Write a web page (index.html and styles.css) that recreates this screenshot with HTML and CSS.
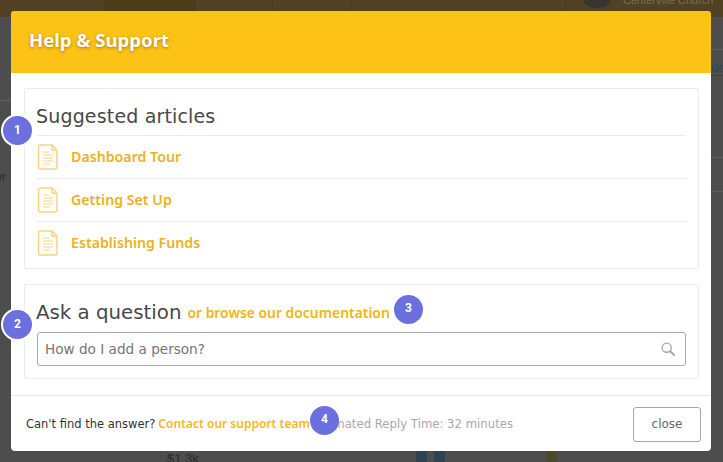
FILE: index.html
```html
<!DOCTYPE html>
<html lang="en">
<head>
<meta charset="utf-8">
<title>Help &amp; Support</title>
<link rel="stylesheet" href="styles.css">
</head>
<body>
<div class="backdrop">
  <div class="bd-top">
    <span class="bd-cell bd-c1"></span><span class="bd-cell bd-c2"></span><span class="bd-cell bd-c3"></span><span class="bd-cell bd-c4"></span><span class="bd-cell bd-c5"></span>
    <span class="bd-avatar"></span><span class="bd-church">Centerville Church</span>
  </div>
  <div class="bd-line bd-line0"></div>
  <div class="bd-line bd-line1"></div>
  <div class="bd-line bd-line2"></div>
  <div class="bd-line bd-line3"></div>
  <span class="bd-link">oo</span>
  <span class="bd-or">or</span>
  <span class="bd-amount">$1.3k</span>
  <span class="bd-bar bd-b1"></span><span class="bd-bar bd-b2"></span><span class="bd-bar bd-b3"></span>
</div>

<div class="modal">
  <header class="modal-head"><h1 class="modal-title">Help &amp; Support</h1></header>
  <div class="modal-body">
    <section class="panel panel-articles">
      <h2 class="panel-title">Suggested articles</h2>
      <ul class="articles">
        <li class="article">
          <svg class="doc" viewBox="0 0 21 26" width="21" height="26"><path d="M1.5 3a2 2 0 0 1 2-2H15l5 5v17a2 2 0 0 1-2 2H3.500a2 2 0 0 1-2-2zM15 1v5h5" fill="none" stroke="#fad47f" stroke-width="1.500"/><path d="M6 8H12M6 11H16M6 14H16M6 17H16M6 20H13" fill="none" stroke="#fad47f" stroke-width="1.200"/></svg>
          <a class="article-link">Dashboard Tour</a>
        </li>
        <li class="article">
          <svg class="doc" viewBox="0 0 21 26" width="21" height="26"><path d="M1.5 3a2 2 0 0 1 2-2H15l5 5v17a2 2 0 0 1-2 2H3.500a2 2 0 0 1-2-2zM15 1v5h5" fill="none" stroke="#fad47f" stroke-width="1.500"/><path d="M6 8H12M6 11H16M6 14H16M6 17H16M6 20H13" fill="none" stroke="#fad47f" stroke-width="1.200"/></svg>
          <a class="article-link">Getting Set Up</a>
        </li>
        <li class="article">
          <svg class="doc" viewBox="0 0 21 26" width="21" height="26"><path d="M1.5 3a2 2 0 0 1 2-2H15l5 5v17a2 2 0 0 1-2 2H3.500a2 2 0 0 1-2-2zM15 1v5h5" fill="none" stroke="#fad47f" stroke-width="1.500"/><path d="M6 8H12M6 11H16M6 14H16M6 17H16M6 20H13" fill="none" stroke="#fad47f" stroke-width="1.200"/></svg>
          <a class="article-link">Establishing Funds</a>
        </li>
      </ul>
    </section>
    <section class="panel panel-ask">
      <div class="ask-head">
        <h2 class="panel-title panel-title-ask">Ask a question</h2>
        <a class="browse">or browse our documentation</a>
      </div>
      <div class="search">
        <span class="search-text">How do I add a person?</span>
        <svg class="search-icon" viewBox="0 0 16 16" width="14" height="14"><circle cx="6.500" cy="6.500" r="5.200" fill="none" stroke="#a9a9a9" stroke-width="1.600"/><path d="M10.500 10.500L15 15" stroke="#a9a9a9" stroke-width="2.400" stroke-linecap="round"/></svg>
      </div>
    </section>
  </div>
  <footer class="modal-foot">
    <span class="foot-q">Can't find the answer?</span>
    <a class="foot-link">Contact our support team</a>
    <span class="foot-time">Estimated Reply Time: 32 minutes</span>
    <button class="close-btn" type="button">close</button>
  </footer>
</div>

<span class="badge badge-ring badge-1">1</span>
<span class="badge badge-ring badge-2">2</span>
<span class="badge badge-3">3</span>
<span class="badge badge-4">4</span>
</body>
</html>
```

FILE: styles.css
```css
* { box-sizing: border-box; }
html, body { margin: 0; padding: 0; }
body {
  width: 723px;
  height: 462px;
  overflow: hidden;
  position: relative;
  background: #4d4d4d;
  font-family: "DejaVu Sans", sans-serif;
}
.backdrop { position: absolute; inset: 0; overflow: hidden; }
.bd-top { position: absolute; left: 0; top: 0; width: 723px; height: 17px; background: #524223; overflow: hidden; }
.bd-cell { position: absolute; top: 0; height: 17px; border-right: 1px solid #483a1e; }
.bd-c1 { left: 0; width: 105px; }
.bd-c2 { left: 105px; width: 91px; background: #4c3c18; }
.bd-c3 { left: 196px; width: 77px; }
.bd-c4 { left: 273px; width: 78px; }
.bd-c5 { left: 351px; width: 215px; }
.bd-avatar { position: absolute; left: 584px; top: -6px; width: 26px; height: 14px; border-radius: 50%; background: #37342f; }
.bd-church { position: absolute; left: 623px; top: -6px; font: 11px "Liberation Sans", sans-serif; color: #756d55; white-space: nowrap; }
.bd-line { position: absolute; height: 1px; background: #5c5c5c; }
.bd-line0 { left: 711px; top: 49px; width: 12px; }
.bd-line1 { left: 0; top: 100px; width: 11px; background: #636363; }
.bd-line2 { left: 711px; top: 157px; width: 12px; }
.bd-line3 { left: 711px; top: 191px; width: 12px; }
.bd-link { position: absolute; left: 711px; top: 61px; width: 12px; overflow: hidden; font: 13px/14px "Liberation Sans", sans-serif; color: #1f4a6b; border-bottom: 1px solid #1f4a6b; }
.bd-or { position: absolute; left: -5px; top: 170px; font: 12px "Liberation Sans", sans-serif; color: #2e2e2e; }
.bd-amount { position: absolute; left: 167px; top: 451px; font: 13px "Liberation Sans", sans-serif; color: #2b2b2b; }
.bd-bar { position: absolute; top: 451px; width: 11px; height: 11px; }
.bd-b1 { left: 416px; background: #2f4453; }
.bd-b2 { left: 434px; background: #2f4453; }
.bd-b3 { left: 546px; background: #4a4a2c; }

.modal {
  position: absolute;
  left: 11px;
  top: 11px;
  width: 700px;
  height: 440px;
  background: #fff;
  border-radius: 4px;
  overflow: hidden;
  display: flex;
  flex-direction: column;
}
.modal-head {
  height: 62px;
  flex: none;
  background: #fcc216;
  display: flex;
  align-items: center;
  padding: 0 0 5px 18px;
}
.modal-title {
  margin: 0;
  font-size: 18.600px;
  font-weight: 700;
  font-family: "Noto Sans", sans-serif;
  color: #fff;
  text-shadow: 0 1px 3px rgba(120, 80, 0, .65);
}
.modal-body { flex: 1; padding: 15px 12px 16px 13px; display: flex; flex-direction: column; gap: 15px; }
.panel { border: 1px solid #ececec; border-radius: 2px; padding: 0 12px; }
.panel-articles { height: 181px; padding-top: 12px; }
.panel-ask { height: 95px; padding-top: 12px; }
.panel-title {
  margin: 0;
  margin-left: -1px;
  font-size: 19px;
  line-height: 30px;
  font-weight: 400;
  color: #484848;
  letter-spacing: .16px;
}
.panel-title-ask { font-size: 19.800px; letter-spacing: 0; position: relative; top: 1px; }
.articles { list-style: none; margin: 4px 0 0; padding: 0; }
.article {
  height: 43px;
  border-top: 1px solid #ececec;
  display: flex;
  align-items: center;
  gap: 13px;
}
.doc { flex: none; }
.article-link {
  font-family: "Noto Sans", sans-serif;
  font-size: 14.200px;
  font-weight: 600;
  color: #edb11f;
  position: relative;
  top: -1px;
}
.ask-head { display: flex; align-items: baseline; gap: 6px; }
.browse {
  font-family: "Noto Sans", sans-serif;
  font-size: 13.900px;
  font-weight: 600;
  color: #f2b50f;
}
.search {
  height: 34px;
  margin-top: 5px;
  border: 1px solid #aaa;
  border-radius: 3px;
  display: flex;
  align-items: center;
  justify-content: space-between;
  padding: 0 10px 0 7px;
}
.search-text { font-size: 13.600px; color: #757575; }
.search-icon { flex: none; }
.modal-foot {
  height: 57px;
  flex: none;
  border-top: 1px solid #e6e6e6;
  display: flex;
  align-items: center;
  padding: 0 10px 0 15px;
  font-size: 11.500px;
  white-space: nowrap;
}
.foot-q { color: #333; }
.foot-link { color: #f5b914; font-weight: 600; font-family: "Noto Sans", sans-serif; font-size: 12px; margin-left: 3px; position: relative; top: -1px; }
.foot-time { color: #a9a9a9; margin-left: 2px; font-size: 11.700px; }
.close-btn {
  margin-left: auto;
  width: 68px;
  height: 35px;
  border: 1px solid #a8a8a8;
  border-radius: 3px;
  background: #fff;
  color: #666;
  font: 12px "DejaVu Sans", sans-serif;
  padding: 0;
}
.badge {
  position: absolute;
  width: 29px;
  height: 29px;
  border-radius: 50%;
  background: #6b70de;
  color: #fff;
  font: 700 12px/29px "Roboto", sans-serif;
  text-align: center;
}
.badge-ring { box-sizing: content-box; border: 2px solid #fff; line-height: 29px; }
.badge-1 { left: 1px; top: 114px; }
.badge-2 { left: 1px; top: 308px; }
.badge-3 { left: 394px; top: 295px; line-height: 27px; }
.badge-4 { left: 310px; top: 406px; line-height: 26px; }
```
